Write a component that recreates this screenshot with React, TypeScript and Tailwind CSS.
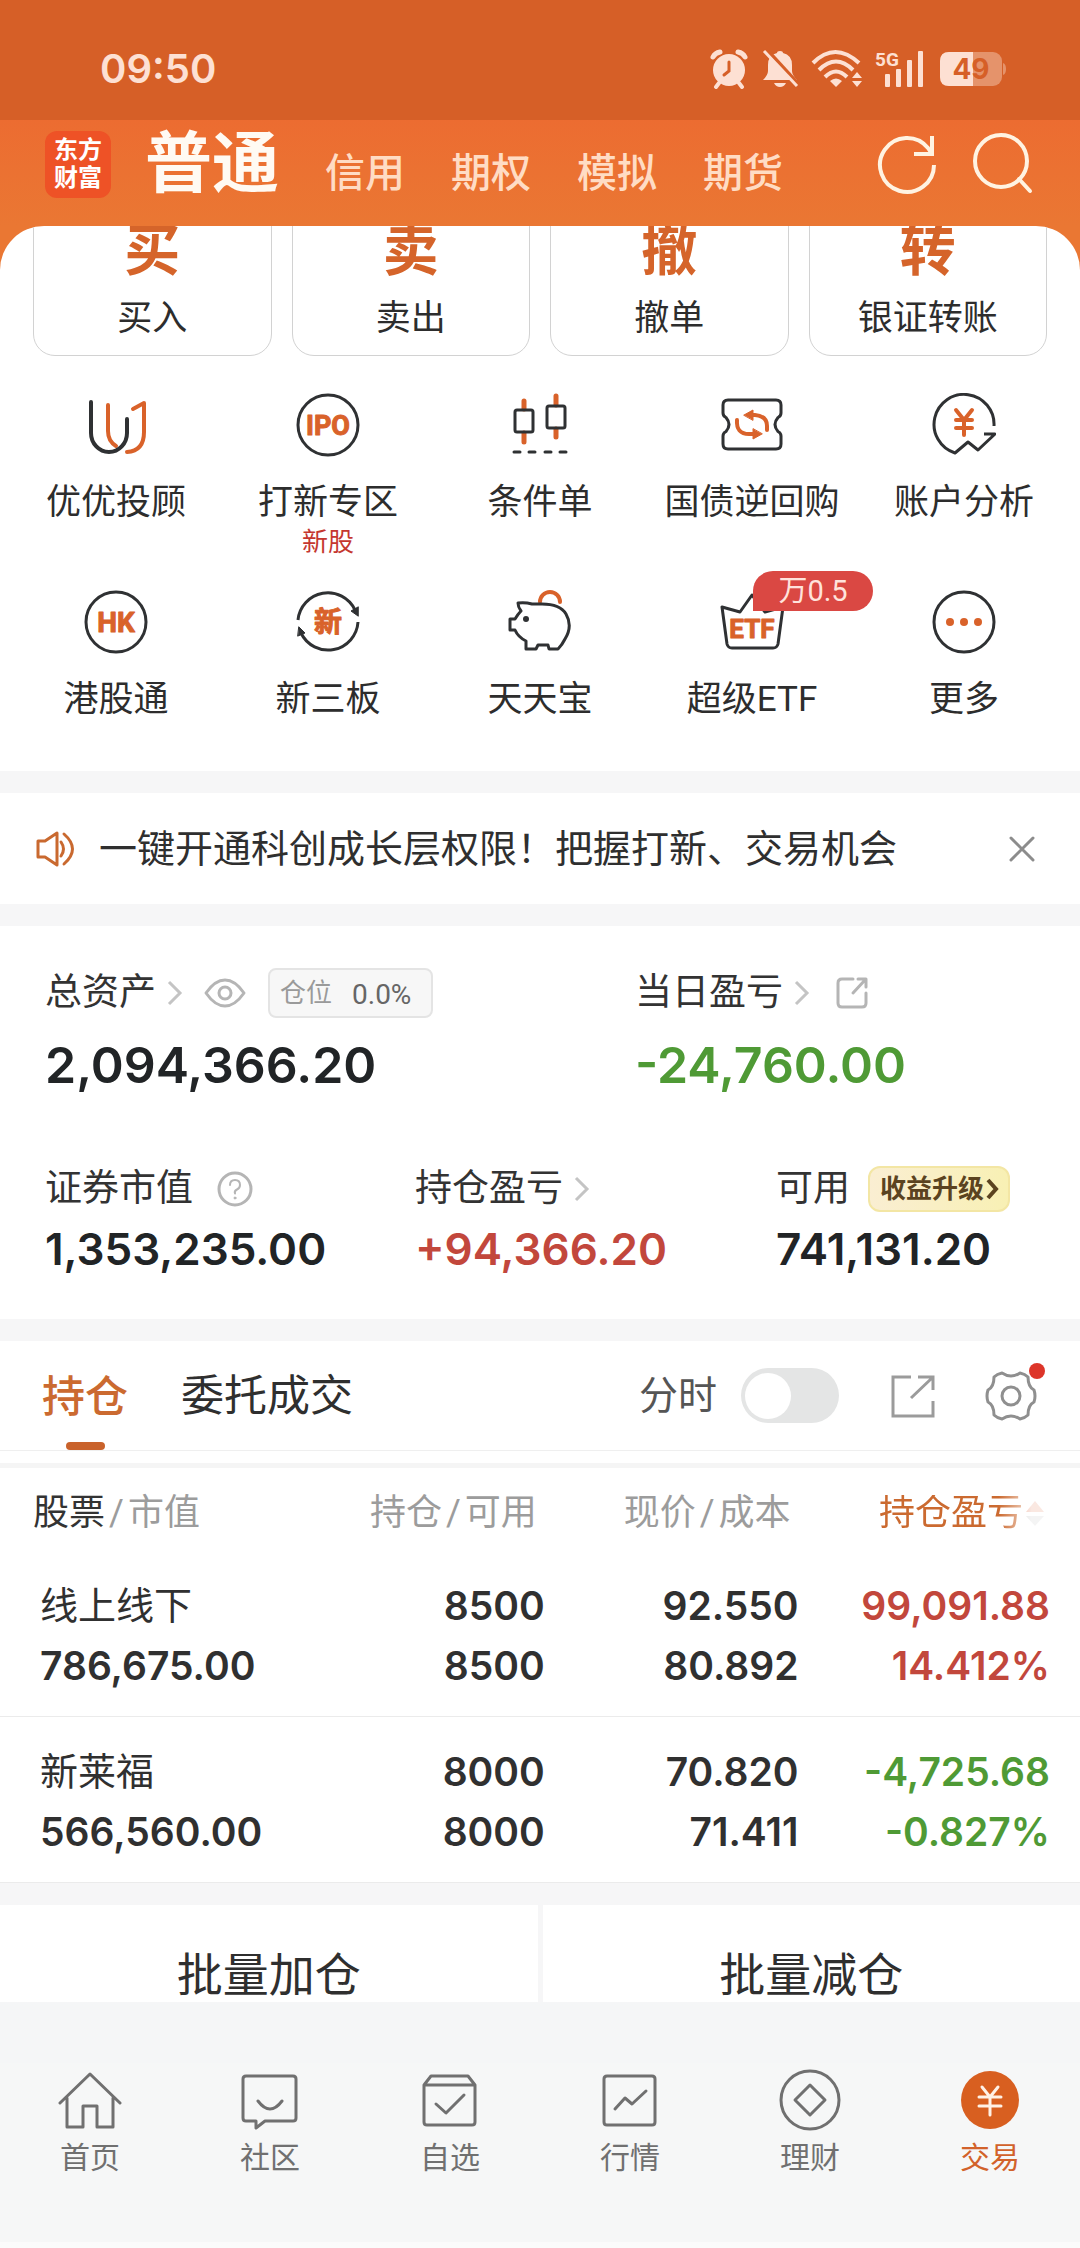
import { FC, ReactNode } from 'react'
import clsx from 'clsx'

const ORANGE = '#d9622a'
const DARK = '#2f3133'
const ICON_FONT = 'Roboto, "Noto Sans CJK SC", sans-serif'

interface IconProps {
    children: ReactNode
    size?: number
    stroke?: string
    strokeWidth?: number
}

const Icon: FC<IconProps> = ({ children, size = 64, stroke = DARK, strokeWidth = 3 }) => (
    <svg
        className="shrink-0"
        width={size}
        height={size}
        viewBox={`0 0 ${size} ${size}`}
        fill="none"
        stroke={stroke}
        strokeWidth={strokeWidth}
        strokeLinecap="round"
        strokeLinejoin="round"
        aria-hidden="true"
    >
        {children}
    </svg>
)

const IconText: FC<{ children: string; y: number; size: number; x?: number }> = ({
    children,
    y,
    size,
    x = 32,
}) => (
    <text
        x={x}
        y={y}
        textAnchor="middle"
        fontFamily={ICON_FONT}
        fontWeight={700}
        fontSize={size}
        fill={ORANGE}
        stroke={ORANGE}
        strokeWidth={1}
    >
        {children}
    </text>
)

const StatusIcons = () => (
    <div className="flex items-center text-[#fde0d3]">
        {/* Alarm */}
        <svg width="40" height="40" viewBox="0 0 40 40" fill="none" stroke="currentColor" strokeLinecap="round">
            <circle cx="20" cy="21" r="16" fill="currentColor" stroke="none" />
            <path d="M4 8q2-4 7-5M36 8q-2-4-7-5" strokeWidth="5" />
            <path d="M10 34l-3 4M30 34l3 4" strokeWidth="4" />
            <path d="M20 13v9l-5 4" stroke="#d65f27" strokeWidth="3" />
        </svg>
        {/* Muted bell */}
        <svg className="ml-3" width="38" height="40" viewBox="0 0 38 40">
            <path
                d="M19 2q3 0 3 2q9 2 9 12v6q0 4 5 9H2q5-5 5-9v-6q0-10 9-12q0-2 3-2z"
                fill="currentColor"
            />
            <path d="M13 34h12q-2 4-6 4t-6-4z" fill="currentColor" />
            <path d="M5 0L39 37" stroke="#d65f27" strokeWidth="4" />
            <path d="M3 2L36 37" stroke="currentColor" strokeWidth="3" />
        </svg>
        {/* Wifi */}
        <svg className="ml-3" width="54" height="40" viewBox="0 0 54 40" fill="none" stroke="currentColor" strokeWidth="4">
            <path d="M2 14q22-22 46 0" />
            <path d="M8 21q17-17 34 0" />
            <path d="M14 28q11-11 22 0" />
            <path d="M25 38l-6-6q6-5 12 0z" fill="currentColor" stroke="none" />
            <path d="M46 23l5 6H41zM46 38l5-6H41z" fill="currentColor" stroke="none" />
        </svg>
        {/* Signal */}
        <svg className="ml-2 overflow-visible" width="50" height="40" viewBox="0 0 50 40" fill="currentColor">
            <text x="2" y="17" fontFamily={ICON_FONT} fontWeight={700} fontSize="19">
                5G
            </text>
            <rect x="12" y="25" width="5" height="13" rx="1" />
            <rect x="23" y="20" width="5" height="18" rx="1" />
            <rect x="34" y="11" width="5" height="27" rx="1" />
            <rect x="45" y="2" width="5" height="36" rx="1" />
        </svg>
        {/* Battery */}
        <svg className="ml-4" width="68" height="36" viewBox="0 0 68 36">
            <rect x="1" y="1" width="62" height="34" rx="9" fill="currentColor" opacity="0.4" />
            <path d="M10 1H34V35H10q-9 0-9-9V10q0-9 9-9z" fill="currentColor" />
            <path d="M64 12q3 1 3 6t-3 6z" fill="currentColor" opacity="0.4" />
            <text
                x="32"
                y="28"
                textAnchor="middle"
                fontFamily="Inter, sans-serif"
                fontWeight={700}
                fontSize="28"
                fill="#d65f27"
            >
                49
            </text>
        </svg>
    </div>
)

const StatusBar = () => (
    <div className="flex h-[120px] items-center justify-between bg-[#d65f27] pt-[18px] pr-[73px] pl-[100px]">
        <span className="font-[Inter] text-[40px] leading-[40px] font-semibold text-[#fde0d3]">
            09:50
        </span>
        <StatusIcons />
    </div>
)

const ACCOUNT_TABS = ['信用', '期权', '模拟', '期货']

const Header = () => (
    <header className="flex h-[106px] items-center bg-linear-to-b from-[#ec6c31] to-[#ea7733] pr-[46px] pb-[18px] pl-[45px]">
        <div className="flex h-[67px] w-[66px] shrink-0 flex-col items-center justify-center rounded-xl bg-[#ee5226] text-[24px] leading-[28px] font-bold text-white">
            <span>东方</span>
            <span>财富</span>
        </div>
        <nav className="ml-[34px] flex items-baseline gap-[46px] whitespace-nowrap">
            <button className="text-[67px] leading-[67px] font-bold text-[#fffaf3]">普通</button>
            {ACCOUNT_TABS.map(tab => (
                <button key={tab} className="text-[40px] leading-[40px] font-medium text-[#ffdcc4]">
                    {tab}
                </button>
            ))}
        </nav>
        <div className="ml-auto flex items-center gap-8">
            <button aria-label="刷新">
                <Icon stroke="#fff3e2" strokeWidth={4}>
                    <path d="M60 33A27 27 0 1 1 54 16L58 22" strokeLinecap="butt" />
                    <path d="M58 4V22H40" strokeLinecap="butt" strokeLinejoin="miter" />
                </Icon>
            </button>
            <button aria-label="搜索">
                <Icon stroke="#fff3e2" strokeWidth={4}>
                    <circle cx="31" cy="29" r="26" />
                    <path d="M49 47L60 59" />
                </Icon>
            </button>
        </div>
    </header>
)

const QUICK_ACTIONS = [
    { glyph: '买', label: '买入' },
    { glyph: '卖', label: '卖出' },
    { glyph: '撤', label: '撤单' },
    { glyph: '转', label: '银证转账' },
]

const QuickActions = () => (
    <div className="-mt-6 grid grid-cols-4 gap-5 px-[33px]">
        {QUICK_ACTIONS.map(({ glyph, label }) => (
            <button
                key={label}
                className="flex flex-col items-center gap-[22px] rounded-[22px] border border-[#d2d2d2] pt-5 pb-[18px]"
            >
                <span className="text-[56px] leading-[56px] font-bold text-[#d5642a]">{glyph}</span>
                <span className="text-[35px] leading-[36px] text-[#2d2d2d]">{label}</span>
            </button>
        ))}
    </div>
)

interface Shortcut {
    label: string
    icon: ReactNode
    note?: string
    badge?: string
}

const SHORTCUTS: Shortcut[] = [
    {
        label: '优优投顾',
        icon: (
            <Icon strokeWidth={4}>
                <path d="M24 12V38q0 10 8 15" stroke={ORANGE} />
                <path d="M7 9V40a18 19 0 0 0 36 0V26" />
                <path d="M43 59q17-1 17-20V10L49 16" stroke={ORANGE} />
            </Icon>
        ),
    },
    {
        label: '打新专区',
        note: '新股',
        icon: (
            <Icon>
                <circle cx="32" cy="32" r="30" />
                <IconText y={42} size={27}>
                    IPO
                </IconText>
            </Icon>
        ),
    },
    {
        label: '条件单',
        icon: (
            <Icon>
                <path d="M16 8V16M16 40V49M48 3V12M48 36V44" stroke={ORANGE} strokeWidth={5} />
                <rect x="7" y="17" width="18" height="22" rx="2" />
                <rect x="39" y="13" width="18" height="22" rx="2" />
                <path d="M6 59H12M21 59H27M37 59H43M52 59H58" />
            </Icon>
        ),
    },
    {
        label: '国债逆回购',
        icon: (
            <Icon>
                <path d="M8 7H56q5 0 5 5v8q0 3-3 4.500q-6 7 0 14q3 1.500 3 4.500v8q0 5-5 5H8q-5 0-5-5v-8q0-3 3-4.500q6-7 0-14q-3-1.500-3-4.500v-8q0-5 5-5z" />
                <g stroke={ORANGE} strokeWidth={4}>
                    <path d="M30 22h5q12 1 12 11v4" />
                    <path d="M17 27q-1 14 12 14h6" />
                </g>
                <g fill={ORANGE} stroke={ORANGE} strokeWidth={1}>
                    <path d="M24 22l9-5v10zM42 41l-9 5V36z" />
                </g>
            </Icon>
        ),
    },
    {
        label: '账户分析',
        icon: (
            <Icon>
                <path d="M62 33A30 30 0 1 0 23 60L36 49L46 57L63 41H52" strokeLinecap="butt" />
                <path d="M24 17L32 27L40 17M24 27H40M24 35H40M32 28V42" stroke={ORANGE} strokeWidth={4} />
            </Icon>
        ),
    },
    {
        label: '港股通',
        icon: (
            <Icon>
                <circle cx="32" cy="32" r="30" />
                <IconText y={42} size={28}>
                    HK
                </IconText>
            </Icon>
        ),
    },
    {
        label: '新三板',
        icon: (
            <Icon>
                <path d="M2 30A30 30 0 0 1 59 20M62 32A30 30 0 0 1 5 43" strokeLinecap="butt" />
                <path d="M62 26L55 21L62 17zM3 37L9 43L2 46z" fill={DARK} strokeWidth={1} />
                <IconText y={42} size={28}>
                    新
                </IconText>
            </Icon>
        ),
    },
    {
        label: '天天宝',
        icon: (
            <Icon>
                <path d="M32 12A10 10 0 0 1 52 12" stroke={ORANGE} strokeWidth={4} />
                <path d="M10 13q7-1 14 1h10q18 0 24 10q7 12-1 25q-3 6-7 10H41l-1-4H30l-2 4H18v-8q-8-4-11-11H2V29h5q3-5 6-8q-3-4-3-8z" />
                <circle cx="18" cy="29" r="3" fill={DARK} stroke="none" />
            </Icon>
        ),
    },
    {
        label: '超级ETF',
        badge: '万0.5',
        icon: (
            <Icon>
                <path d="M2 17L20 22L32 5L45 22L63 17L58 54q-1 4-5 4H12q-4 0-5-4z" />
                <IconText y={48} size={26}>
                    ETF
                </IconText>
            </Icon>
        ),
    },
    {
        label: '更多',
        icon: (
            <Icon>
                <circle cx="32" cy="32" r="30" />
                <g fill={ORANGE} stroke="none">
                    <circle cx="18" cy="32" r="4" />
                    <circle cx="32" cy="32" r="4" />
                    <circle cx="46" cy="32" r="4" />
                </g>
            </Icon>
        ),
    },
]

const Shortcuts = () => (
    <div className="grid grid-cols-5 gap-y-[35px] px-[10px] pt-[37px] pb-[53px]">
        {SHORTCUTS.map(({ label, icon, note, badge }) => (
            <button key={label} className="flex flex-col items-center justify-start">
                <span className="relative">
                    {icon}
                    {badge && (
                        <span className="absolute -top-[19px] left-[33px] w-[120px] rounded-[20px] rounded-bl-none bg-[#da4843] text-center text-[29px] leading-[40px] text-[#ffe3dc]">
                            {badge}
                        </span>
                    )}
                </span>
                <span className="mt-7 text-[35px] leading-[36px] whitespace-nowrap text-[#2d2d2d]">
                    {label}
                </span>
                {note && (
                    <span className="mt-2 text-[26px] leading-[26px] text-[#c5372f]">{note}</span>
                )}
            </button>
        ))}
    </div>
)

const Notice = () => (
    <section className="flex items-center bg-white pt-[36px] pr-[42px] pb-[35px] pl-[35px]">
        <Icon size={40} stroke="#c9692f">
            <path d="M3 12H10L22 4V36L10 28H3z" />
            <path d="M26 13q5 7 0 14M29 5q17 15 0 30" />
        </Icon>
        <p className="ml-6 text-[38px] leading-[38px] whitespace-nowrap text-[#2f2f2f]">
            一键开通科创成长层权限！把握打新、交易机会
        </p>
        <button className="ml-auto" aria-label="关闭">
            <Icon size={32} stroke="#8c8c8c">
                <path d="M5 5L27 27M27 5L5 27" />
            </Icon>
        </button>
    </section>
)

const Chevron = () => (
    <svg width="18" height="26" viewBox="0 0 18 26" fill="none" stroke="#c4c4c4" strokeWidth="3">
        <path d="M3 2L14 13L3 24" />
    </svg>
)

const Label: FC<{ children: ReactNode }> = ({ children }) => (
    <span className="text-[37px] leading-[38px] whitespace-nowrap text-[#333]">{children}</span>
)

const Assets = () => (
    <section className="bg-white pt-[42px] pb-12 pl-[45px]">
        <div className="grid grid-cols-[590fr_445fr]">
            <div>
                <div className="flex h-[50px] items-center">
                    <Label>总资产</Label>
                    <span className="ml-[10px]">
                        <Chevron />
                    </span>
                    <button className="ml-5" aria-label="隐藏金额">
                        <svg width="42" height="30" viewBox="0 0 42 30" fill="none" stroke="#b5b5b5" strokeWidth="3">
                            <path d="M2 15Q11 2 21 2T40 15Q31 28 21 28T2 15z" strokeLinejoin="round" />
                            <circle cx="21" cy="15" r="6" />
                        </svg>
                    </button>
                    <span className="ml-[22px] flex h-[50px] items-center gap-5 rounded-lg border-2 border-[#e4e4e4] bg-[#f7f7f7] pr-5 pl-[10px] text-[26px] leading-[26px] text-[#9a9a9a]">
                        仓位
                        <span className="pt-1 text-[28px] text-[#666]">0.0%</span>
                    </span>
                </div>
                <div className="mt-[22px] font-[Inter] text-[50px] leading-[51px] font-semibold text-[#212426]">
                    2,094,366.20
                </div>
            </div>
            <div>
                <div className="flex h-[50px] items-center">
                    <Label>当日盈亏</Label>
                    <span className="ml-[10px]">
                        <Chevron />
                    </span>
                    <button className="ml-6" aria-label="分享当日盈亏">
                        <Icon size={34} stroke="#b5b5b5">
                            <path d="M18 3H7q-4 0-4 4V27q0 4 4 4H27q4 0 4-4V17M23 3H31V11M30 4L18 17" />
                        </Icon>
                    </button>
                </div>
                <div className="mt-[22px] font-[Inter] text-[50px] leading-[51px] font-semibold text-[#4f9a35]">
                    -24,760.00
                </div>
            </div>
        </div>

        <div className="mt-[75px] grid grid-cols-[370fr_361fr_304fr] font-[Inter] text-[44px] leading-[44px] font-semibold">
            <div>
                <div className="flex h-[46px] items-center font-[Roboto,'Noto_Sans_CJK_SC',sans-serif] font-normal">
                    <Label>证券市值</Label>
                    <button className="ml-6" aria-label="证券市值说明">
                        <Icon size={36} stroke="#b5b5b5">
                            <circle cx="18" cy="18" r="16" />
                            <path d="M13 14q0-5 5-5t5 5q0 3-3 4.500t-2 4" strokeWidth={2} />
                            <circle cx="18" cy="27" r="1" fill="#b5b5b5" strokeWidth={1} />
                        </Icon>
                    </button>
                </div>
                <div className="mt-[15px] text-[#212426]">1,353,235.00</div>
            </div>
            <div>
                <div className="flex h-[46px] items-center font-[Roboto,'Noto_Sans_CJK_SC',sans-serif] font-normal">
                    <Label>持仓盈亏</Label>
                    <span className="ml-[10px]">
                        <Chevron />
                    </span>
                </div>
                <div className="mt-[15px] text-[#c2473c]">+94,366.20</div>
            </div>
            <div>
                <div className="flex h-[46px] items-center font-[Roboto,'Noto_Sans_CJK_SC',sans-serif] font-normal">
                    <Label>可用</Label>
                    <button className="ml-[18px] flex h-[46px] items-center rounded-xl border-2 border-[#f3e6a4] bg-linear-to-r from-[#faeed2] to-[#f8f0b4] pr-2 pl-[10px] text-[26px] leading-[26px] font-bold whitespace-nowrap text-[#5b4320]">
                        收益升级
                        <svg width="16" height="24" viewBox="0 0 16 24" fill="none" stroke="#5b4320" strokeWidth="4">
                            <path d="M4 3L12 12L4 21" />
                        </svg>
                    </button>
                </div>
                <div className="mt-[15px] text-[#212426]">741,131.20</div>
            </div>
        </div>
    </section>
)

const HoldingTabs = () => (
    <div className="flex h-[110px] items-center border-b border-[#efefef] px-[42px] text-[43px] leading-[44px]">
        <button className="flex h-full flex-col items-center justify-between pt-[34px] font-medium text-[#cb6a30]">
            持仓
            <span className="h-2 w-[39px] rounded-full bg-[#c9622b]" />
        </button>
        <button className="ml-[53px] text-[#2f2f2f]">委托成交</button>
        <label className="ml-auto flex items-center text-[39px] text-[#555]">
            分时
            <input type="checkbox" className="peer sr-only" />
            <span className="ml-6 flex h-[55px] w-[98px] items-center rounded-full bg-[#e4e5e5] px-1 peer-checked:justify-end peer-checked:bg-[#d9622a]">
                <span className="size-[46px] rounded-full bg-white" />
            </span>
        </label>
        <button className="ml-[52px]" aria-label="分享持仓">
            <Icon size={44} stroke="#9b9b9b">
                <path d="M20 3H2V42H42V27M27 3H42V16M41 4L20 24" strokeLinecap="butt" strokeLinejoin="miter" />
            </Icon>
        </button>
        <button className="relative ml-[49px]" aria-label="设置">
            <Icon size={54} stroke="#8f8f8f">
                <path d="M18 4q9 6 18 0q5 1 8 4q0 10 6 13q2 6 0 12q-6 3-6 13q-3 3-8 4q-9-6-18 0q-5-1-8-4q0-10-6-13q-2-6 0-12q6-3 6-13q3-3 8-4z" />
                <circle cx="27" cy="27" r="9" />
            </Icon>
            <span className="absolute -top-[6px] -right-[7px] size-4 rounded-full bg-[#dd3529]" />
        </button>
    </div>
)

interface Holding {
    name: string
    marketValue: string
    amount: string
    available: string
    price: string
    cost: string
    profit: string
    profitRate: string
}

const HOLDINGS: Holding[] = [
    {
        name: '线上线下',
        marketValue: '786,675.00',
        amount: '8500',
        available: '8500',
        price: '92.550',
        cost: '80.892',
        profit: '99,091.88',
        profitRate: '14.412%',
    },
    {
        name: '新莱福',
        marketValue: '566,560.00',
        amount: '8000',
        available: '8000',
        price: '70.820',
        cost: '71.411',
        profit: '-4,725.68',
        profitRate: '-0.827%',
    },
]

const Slash = () => <span className="px-1">/</span>

const HoldingTable = () => (
    <table className="w-full table-fixed border-t-[5px] border-[#f5f5f5]">
        <colgroup>
            <col className="w-[27%]" />
            <col className="w-[24%]" />
            <col className="w-[23.5%]" />
            <col />
        </colgroup>
        <thead>
            <tr className="text-[36px] leading-[36px] whitespace-nowrap text-[#9c9c9c] *:pt-[27px] *:pb-5 *:font-normal">
                <th className="pl-[33px] text-left">
                    <span className="text-[#333]">股票</span>
                    <Slash />
                    市值
                </th>
                <th className="pr-[14px] text-right">
                    持仓
                    <Slash />
                    可用
                </th>
                <th className="pr-[14px] text-right">
                    现价
                    <Slash />
                    成本
                </th>
                <th className="pr-[35px]">
                    <button className="ml-auto flex items-center gap-[2px] text-[#cb6a30] [mask-image:linear-gradient(to_right,black_72%,rgb(0_0_0/0.2)_92%)]">
                        持仓盈亏
                        <svg width="20" height="30" viewBox="0 0 20 30" aria-hidden="true">
                            <path d="M10 3L19 14H1z" fill="#e58a6a" />
                            <path d="M10 28L19 18H1z" fill="#c9c9c9" />
                        </svg>
                    </button>
                </th>
            </tr>
        </thead>
        <tbody>
            {HOLDINGS.map(item => (
                <tr
                    key={item.name}
                    className="border-b border-[#ebebeb] text-right font-[Inter] text-[39px] leading-[40px] font-semibold text-[#303030] *:pt-[35px] *:pb-[30px]"
                >
                    <td className="pl-10 text-left">
                        <div className="font-[Roboto,'Noto_Sans_CJK_SC',sans-serif] text-[38px] font-normal">
                            {item.name}
                        </div>
                        <div className="mt-5">{item.marketValue}</div>
                    </td>
                    <td className="pr-[6px]">
                        <div>{item.amount}</div>
                        <div className="mt-5">{item.available}</div>
                    </td>
                    <td className="pr-[6px]">
                        <div>{item.price}</div>
                        <div className="mt-5">{item.cost}</div>
                    </td>
                    <td
                        className={clsx(
                            'pr-[30px]',
                            item.profit.startsWith('-') ? 'text-[#4f9a35]' : 'text-[#c2473c]'
                        )}
                    >
                        <div>{item.profit}</div>
                        <div className="mt-5">{item.profitRate}</div>
                    </td>
                </tr>
            ))}
        </tbody>
    </table>
)

const BatchActions = () => (
    <div className="grid grid-cols-2 gap-[5px] text-[46px] leading-[47px] text-[#2f2f2f]">
        <button className="bg-white pt-[47px] pb-[3px]">批量加仓</button>
        <button className="bg-white pt-[47px] pb-[3px]">批量减仓</button>
    </div>
)

interface NavItem {
    label: string
    icon: ReactNode
    active?: boolean
}

const NAV_ITEMS: NavItem[] = [
    {
        label: '首页',
        icon: <path d="M2 34L32 5L62 34M9 29V58H25V37H39V58H55V29" />,
    },
    {
        label: '社区',
        icon: (
            <path d="M8 7H55q3 0 3 3V49q0 3-3 3H27L18 59V52H8q-3 0-3-3V10q0-3 3-3zM20 32q12 16 24 0" />
        ),
    },
    {
        label: '自选',
        icon: (
            <path d="M6 16L13 7H50L57 16V53q0 3-3 3H9q-3 0-3-3V16H57M18 35L28 44L46 26" />
        ),
    },
    {
        label: '行情',
        icon: <path d="M9 7H54q3 0 3 3V53q0 3-3 3H9q-3 0-3-3V10q0-3 3-3zM17 40L27 29L34 35L48 22" />,
    },
    {
        label: '理财',
        icon: (
            <>
                <circle cx="32" cy="31" r="29" />
                <path d="M32 16L47 31L32 46L17 31z" />
            </>
        ),
    },
    {
        label: '交易',
        active: true,
        icon: (
            <>
                <circle cx="32" cy="31" r="29" fill="#d85f20" stroke="none" />
                <path d="M24 18L32 28L40 18M21 28H43M21 37H43M32 28V46" stroke="#fff1e6" />
            </>
        ),
    },
]

const BottomNav = () => (
    <nav className="grid grid-cols-6 border-b-[6px] border-[#fbfbfb] bg-[#f6f7f7] pt-[6px] pb-[69px]">
        {NAV_ITEMS.map(({ label, icon, active }) => (
            <a
                key={label}
                href={`#${label}`}
                className={clsx(
                    'flex flex-col items-center gap-[10px] text-[30px] leading-[30px]',
                    active ? 'text-[#d2622a]' : 'text-[#707070]'
                )}
            >
                <Icon stroke="currentColor">{icon}</Icon>
                {label}
            </a>
        ))}
    </nav>
)

export default function App() {
    return (
        <div className="bg-[#f6f6f7] font-[Roboto,'Noto_Sans_CJK_SC',sans-serif]">
            <StatusBar />
            <Header />
            <main className="flex flex-col gap-[22px]">
                <section className="bg-[#ea7733]">
                    <div className="overflow-hidden rounded-t-[44px] bg-white">
                        <QuickActions />
                        <Shortcuts />
                    </div>
                </section>
                <Notice />
                <Assets />
                <section className="bg-white">
                    <HoldingTabs />
                    <div className="pt-3">
                        <HoldingTable />
                    </div>
                </section>
                <BatchActions />
            </main>
            <div className="h-[61px] bg-[#f5f6f7]" />
            <BottomNav />
        </div>
    )
}
